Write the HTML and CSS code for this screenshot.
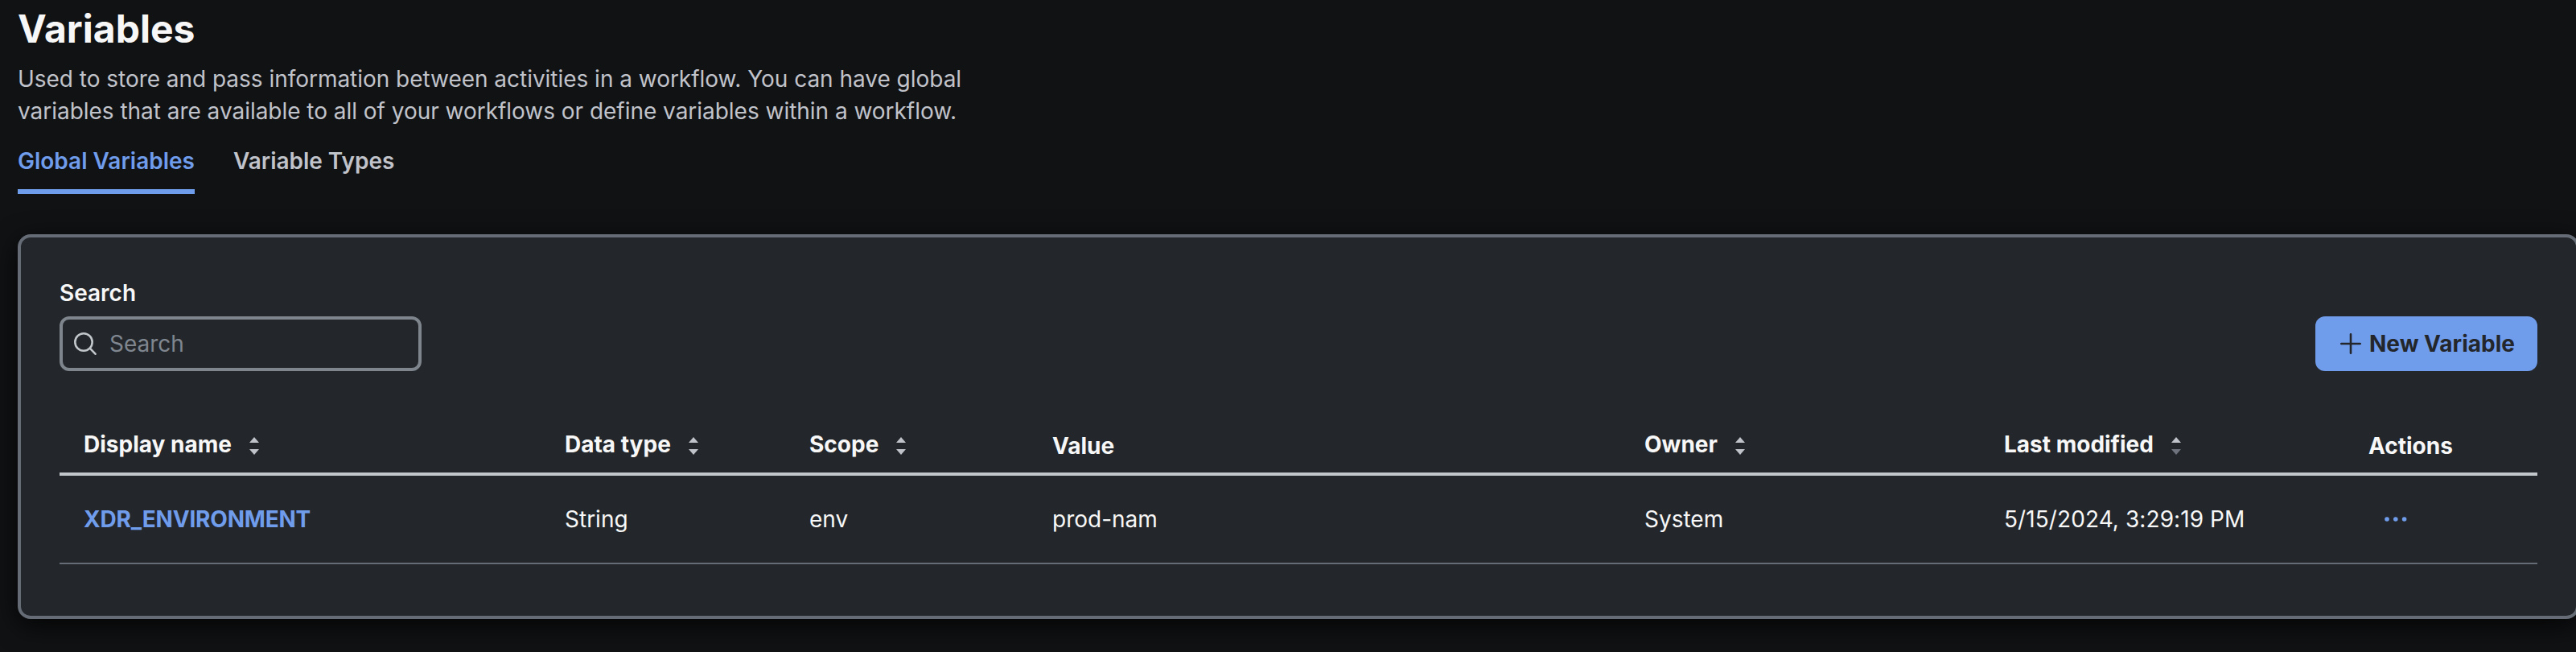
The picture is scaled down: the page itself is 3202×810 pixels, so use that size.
FILE: index.html
```html
<!DOCTYPE html>
<html lang="en">
<head>
<meta charset="utf-8">
<title>Variables</title>
<link rel="stylesheet" href="styles.css">
</head>
<body>
<svg class="defs" width="0" height="0" aria-hidden="true">
  <symbol id="sort" viewBox="0 0 12 22"><path d="M6 0L12 7H0z"/><path class="down" d="M0 15H12L6 22z"/></symbol>
</svg>
<main class="page">
  <h1 class="title">Variables</h1>
  <p class="description">Used to store and pass information between activities in a workflow. You can have global<br>variables that are available to all of your workflows or define variables within a workflow.</p>
  <nav class="tabs">
    <a class="tab active">Global Variables</a>
    <a class="tab">Variable Types</a>
  </nav>
  <section class="panel">
    <div class="toolbar">
      <div class="field">
        <label class="label">Search</label>
        <div class="input">
          <svg class="search-icon" width="28" height="28" viewBox="0 0 28 28"><circle cx="12" cy="12" r="10.7"/><path d="M19.7 19.7L26.5 26.7"/></svg>
          <span class="placeholder">Search</span>
        </div>
      </div>
      <button class="button">
        <svg width="26" height="26" viewBox="0 0 26 26"><path d="M13 1.3V24.7M1.3 13H24.7"/></svg>
        <span>New Variable</span>
      </button>
    </div>
    <div class="table">
      <div class="row head">
        <div class="cell"><span>Display name</span><svg class="sort" width="12" height="22"><use href="#sort"/></svg></div>
        <div class="cell"><span>Data type</span><svg class="sort" width="12" height="22"><use href="#sort"/></svg></div>
        <div class="cell"><span>Scope</span><svg class="sort" width="12" height="22"><use href="#sort"/></svg></div>
        <div class="cell plain">Value</div>
        <div class="cell"><span>Owner</span><svg class="sort" width="12" height="22"><use href="#sort"/></svg></div>
        <div class="cell"><span>Last modified</span><svg class="sort ascending" width="12" height="22"><use href="#sort"/></svg></div>
        <div class="cell plain">Actions</div>
      </div>
      <div class="row body">
        <div class="cell link">XDR_ENVIRONMENT</div>
        <div class="cell">String</div>
        <div class="cell">env</div>
        <div class="cell">prod-nam</div>
        <div class="cell">System</div>
        <div class="cell date">5/15/2024, 3:29:19 PM</div>
        <div class="cell"><svg class="more" width="28" height="6" viewBox="0 0 28 6"><circle cx="3" cy="3" r="2.8"/><circle cx="13.8" cy="3" r="2.8"/><circle cx="24.6" cy="3" r="2.8"/></svg></div>
      </div>
    </div>
  </section>
</main>
</body>
</html>
```
FILE: styles.css
```css
* { box-sizing: border-box; }
body {
  margin: 0;
  height: 810px;
  overflow: hidden;
  background: #111214;
  color: #f7f7f7;
  font-family: Inter, sans-serif;
  font-size: 28px;
  line-height: 40px;
}
.defs { display: block; }
.page { display: flex; flex-direction: column; padding-left: 22px; }
.title { margin: 6px 0 0; font-size: 48px; line-height: 60px; font-weight: 700; }
.description { margin: 12px 0 0; color: #c1c3ca; letter-spacing: -0.03px; white-space: nowrap; }
.tabs { display: flex; gap: 48px; margin-top: 22px; }
.tab { height: 61px; color: #c1c3ca; font-weight: 600; border-bottom: 6px solid transparent; letter-spacing: -0.03px; }
.active { width: 220px; color: #709cec; border-color: #709cec; letter-spacing: 0; white-space: nowrap; }
.panel {
  width: 3184px;
  height: 478px;
  margin-top: 50px;
  padding: 48px 48px 0;
  border: 4px solid #656c75;
  border-radius: 16px;
  background: #23272b;
  box-shadow: 0 8px 32px rgba(0, 0, 0, 0.8);
}
.toolbar { display: flex; justify-content: space-between; align-items: flex-end; height: 118px; }
.label { display: block; margin-bottom: 9px; font-weight: 600; }
.input {
  display: flex;
  align-items: center;
  gap: 16px;
  width: 450px;
  height: 68px;
  padding-left: 14px;
  border: 4px solid #7f858d;
  border-radius: 12px;
}
.search-icon { fill: none; stroke: #c1c6cb; stroke-width: 2.6; stroke-linecap: round; }
.placeholder { color: #7f868f; }
.button {
  display: flex;
  align-items: center;
  gap: 10px;
  width: 276px;
  height: 68px;
  padding: 0 0 0 31px;
  border: 0;
  border-radius: 12px;
  background: #709cec;
  color: #23272b;
  font: 700 28px/40px Inter, sans-serif;
  white-space: nowrap;
}
.button svg { flex: none; fill: none; stroke: #23272b; stroke-width: 2.6; stroke-linecap: round; }
.table { margin-top: 60px; }
.row { display: grid; grid-template-columns: 598px 304px 302px 736px 447px 453px 240px; }
.cell { display: flex; align-items: center; padding-left: 30px; white-space: nowrap; }
.head { height: 70px; padding-top: 11px; align-items: start; border-bottom: 4px solid #c1c6cb; font-weight: 700; }
.head .cell { height: 40px; gap: 22px; }
.head .plain { margin-top: 2px; }
.sort { margin-top: 4px; fill: #c1c3ca; }
.ascending { --down: #6f737d; }
.down { fill: var(--down, #c1c3ca); }
.body { height: 110px; border-bottom: 2px solid #656c75; }
.link { color: #709cec; font-weight: 700; letter-spacing: -0.2px; }
.date { letter-spacing: 0.08px; }
.more { margin-left: 20px; fill: #709cec; }
```
